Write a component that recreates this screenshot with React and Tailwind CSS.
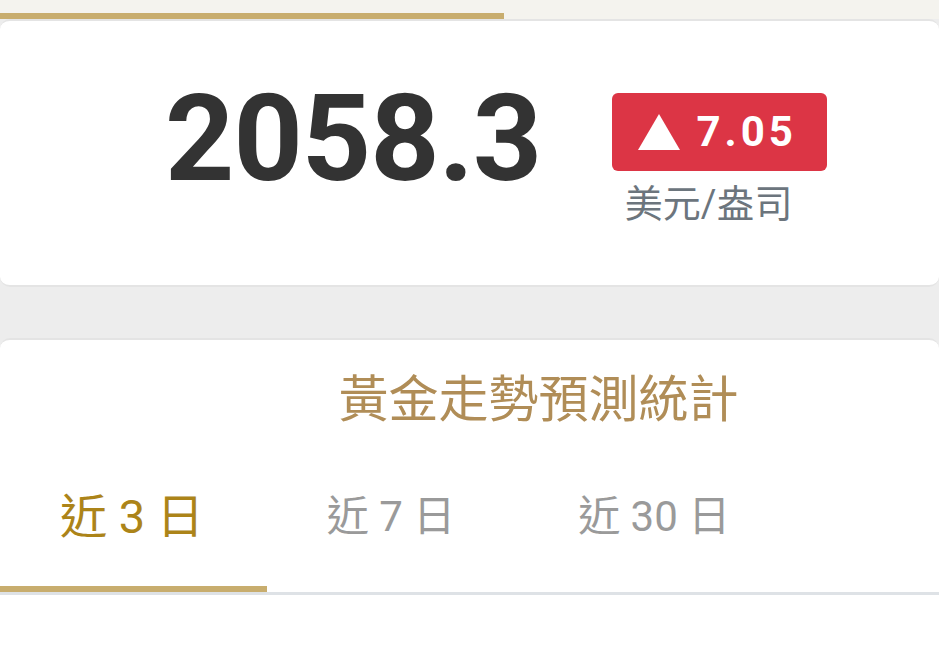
import React, { useState } from 'react';

const tabs = ['近 3 日', '近 7 日', '近 30 日'];

const App = () => {
  const [active, setActive] = useState(0);

  return (
    <div className="min-h-[667px] bg-[#ededed] font-['Roboto','Noto_Sans_CJK_TC',sans-serif]">
      {/* top progress strip */}
      <div className="h-[19px] bg-[#f4f3ee] pt-[13px]">
        <div className="h-[6px] w-[504px] bg-[#c8ad6e]"></div>
      </div>

      {/* price card */}
      <div className="h-[268px] rounded-[10px] border-y-2 border-[#e4e4e4] bg-white">
        <div className="flex items-start pl-[165px] pt-[58px]">
          <div className="text-[121px] font-bold leading-none tracking-[-1px] text-[#333333]">
            2058.3
          </div>
          <div className="ml-[71px] mt-[14px] flex flex-col items-center">
            <div className="flex h-[78px] w-[215px] items-center justify-center gap-[16px] rounded-[6px] bg-[#dc3545] pr-[4px] text-white">
              <svg width="42" height="36" viewBox="0 0 42 36">
                <polygon points="21,0 42,36 0,36" fill="#ffffff" />
              </svg>
              <span className="text-[42px] font-bold leading-none tracking-[4px]">7.05</span>
            </div>
            <div className="mt-[14px] mr-[22px] text-[38px] leading-none text-[#6c757d]">美元/盎司</div>
          </div>
        </div>
      </div>

      <div className="h-[51px]"></div>

      {/* stats card */}
      <div className="h-[329px] rounded-t-[10px] border-t-2 border-[#e4e4e4] bg-white">
        <div className="flex justify-center pl-[138px] pt-[30px]">
          <h2 className="text-[50px] font-normal leading-none text-[#b08d57] font-['Noto_Sans_CJK_TC',sans-serif]">
            黃金走勢預測統計
          </h2>
        </div>
        <div className="mt-[73px] flex border-b-[3px] border-[#dee2e6]">
          {tabs.map((t, i) => (
            <button
              key={t}
              onClick={() => setActive(i)}
              className={
                i === active
                  ? "border-b-[6px] border-[#c8ad6e] pl-[60px] pr-[63px] pb-[46px] text-[47px] leading-none text-[#ac8419]"
                  : "border-b-[6px] border-transparent pl-[60px] pr-[63px] pb-[46px] text-[42px] leading-none text-[#9a9a9a]"
              }
            >
              {t}
            </button>
          ))}
        </div>
      </div>
    </div>
  );
};

export default App;
